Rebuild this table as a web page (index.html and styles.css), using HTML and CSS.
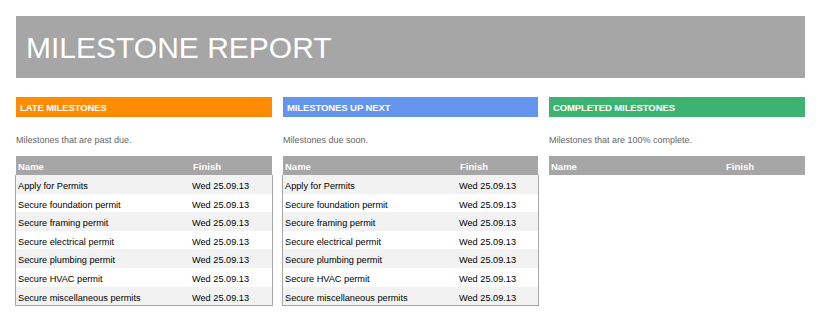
FILE: index.html
```html
<!DOCTYPE html>
<html>
<head>
<meta charset="utf-8">
<link rel="stylesheet" href="styles.css">
</head>
<body>
<div class="page">
  <div class="title">MILESTONE REPORT</div>
  <div class="cols">
    <section class="col">
      <div class="head late">LATE MILESTONES</div>
      <div class="desc">Milestones that are past due.</div>
      <div class="thead"><span class="c1">Name</span><span class="c2">Finish</span></div>
      <div class="tbody">
        <div class="row"><span class="c1">Apply for Permits</span><span class="c2">Wed 25.09.13</span></div>
        <div class="row"><span class="c1">Secure foundation permit</span><span class="c2">Wed 25.09.13</span></div>
        <div class="row"><span class="c1">Secure framing permit</span><span class="c2">Wed 25.09.13</span></div>
        <div class="row"><span class="c1">Secure electrical permit</span><span class="c2">Wed 25.09.13</span></div>
        <div class="row"><span class="c1">Secure plumbing permit</span><span class="c2">Wed 25.09.13</span></div>
        <div class="row"><span class="c1">Secure HVAC permit</span><span class="c2">Wed 25.09.13</span></div>
        <div class="row"><span class="c1">Secure miscellaneous permits</span><span class="c2">Wed 25.09.13</span></div>
      </div>
    </section>
    <section class="col">
      <div class="head next">MILESTONES UP NEXT</div>
      <div class="desc">Milestones due soon.</div>
      <div class="thead"><span class="c1">Name</span><span class="c2">Finish</span></div>
      <div class="tbody">
        <div class="row"><span class="c1">Apply for Permits</span><span class="c2">Wed 25.09.13</span></div>
        <div class="row"><span class="c1">Secure foundation permit</span><span class="c2">Wed 25.09.13</span></div>
        <div class="row"><span class="c1">Secure framing permit</span><span class="c2">Wed 25.09.13</span></div>
        <div class="row"><span class="c1">Secure electrical permit</span><span class="c2">Wed 25.09.13</span></div>
        <div class="row"><span class="c1">Secure plumbing permit</span><span class="c2">Wed 25.09.13</span></div>
        <div class="row"><span class="c1">Secure HVAC permit</span><span class="c2">Wed 25.09.13</span></div>
        <div class="row"><span class="c1">Secure miscellaneous permits</span><span class="c2">Wed 25.09.13</span></div>
      </div>
    </section>
    <section class="col">
      <div class="head done">COMPLETED MILESTONES</div>
      <div class="desc">Milestones that are 100% complete.</div>
      <div class="thead"><span class="c1">Name</span><span class="c2">Finish</span></div>
    </section>
  </div>
</div>
</body>
</html>
```
FILE: styles.css
```css
html, body { margin: 0; padding: 0; background: #fff; }
body { font-family: "Liberation Sans", Arial, sans-serif; }
.page { padding: 16px 25px 0 16px; }
.title {
  height: 62px;
  background: #a6a6a6;
  color: #fff;
  font-size: 30px;
  box-sizing: border-box;
  padding-top: 8px;
  padding-left: 10px;
  line-height: 48px;
}
.cols {
  margin-top: 19px;
  display: grid;
  grid-template-columns: 256px 255px 256px;
  column-gap: 11px;
}
.head {
  height: 20px;
  line-height: 21px;
  color: #fff;
  font-weight: bold;
  font-size: 9.5px;
  padding-left: 4px;
  letter-spacing: -0.1px;
}
.late { background: #ff8c00; }
.next { background: #6495ed; }
.done { background: #3cb371; }
.desc {
  margin-top: 17px;
  height: 22px;
  font-size: 9px;
  color: #666;
  line-height: 13px;
}
.thead {
  display: flex;
  height: 19px;
  line-height: 22px;
  background: #a6a6a6;
  color: #fff;
  font-weight: bold;
  font-size: 9.5px;
}
.c1 { width: 177px; padding-left: 2px; box-sizing: border-box; }
.c2 { flex: 1; }
.tbody {
  border: 1px solid #a6a6a6;
  border-top: none;
  margin-left: -1px;
  margin-right: -1px;
}
.row {
  display: flex;
  height: 18.6px;
  line-height: 22px;
  font-size: 9.2px;
  color: #000;
}
.row:nth-child(odd) { background: #f2f2f2; }
.row:nth-child(even) { background: #fff; }
.row .c1 { width: 176px; padding-left: 2px; }
```
